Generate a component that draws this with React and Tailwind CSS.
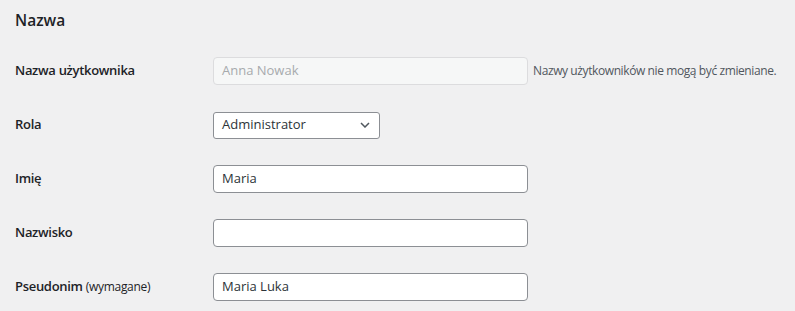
const font = { fontFamily: '"Open Sans", "Noto Sans", sans-serif' };

const Row = ({ label, children }) => (
    <div className="flex items-center h-[54px]">
        <div className="w-[198px] shrink-0 text-[13px] font-semibold tracking-[-0.3px] text-[#1d2327]">{label}</div>
        <div className="flex items-center whitespace-nowrap">{children}</div>
    </div>
);

const TextInput = ({ value, disabled }) => (
    <div
        className={`w-[315px] h-[28px] rounded-[4px] border px-2 flex items-center text-[13px] ${
            disabled ? "bg-[#f6f7f7] border-[#dcdcde] text-[#a7aaad]" : "bg-white border-[#8c8f94] text-[#2c3338]"
        }`}
    >
        {value}
    </div>
);

export default function App() {
    return (
        <div className="min-h-[311px] w-[795px] bg-[#f0f0f1] pl-[15px] pt-[9px]" style={font}>
            <h2 className="text-[15.5px] font-semibold text-[#1d2327] leading-[22px]">Nazwa</h2>
            <div className="mt-[13px]">
                <Row label="Nazwa użytkownika">
                    <TextInput value="Anna Nowak" disabled />
                    <span className="ml-[5px] text-[12px] tracking-[-0.4px] text-[#50575e]">Nazwy użytkowników nie mogą być zmieniane.</span>
                </Row>
                <Row label="Rola">
                    <div className="w-[167px] h-[27px] rounded-[3px] border border-[#8c8f94] bg-white pl-2 pr-2 flex items-center justify-between text-[13px] text-[#2c3338]">
                        <span>Administrator</span>
                        <svg width="10" height="6" viewBox="0 0 10 6" fill="none" className="mr-[1px]">
                            <path d="M1 1l4 4 4-4" stroke="#50575e" strokeWidth="1.5" />
                        </svg>
                    </div>
                </Row>
                <Row label="Imię">
                    <TextInput value="Maria" />
                </Row>
                <Row label="Nazwisko">
                    <TextInput value="" />
                </Row>
                <Row
                    label={
                        <>
                            Pseudonim <span className="text-[12px] font-medium">(wymagane)</span>
                        </>
                    }
                >
                    <TextInput value="Maria Luka" />
                </Row>
            </div>
        </div>
    );
}
